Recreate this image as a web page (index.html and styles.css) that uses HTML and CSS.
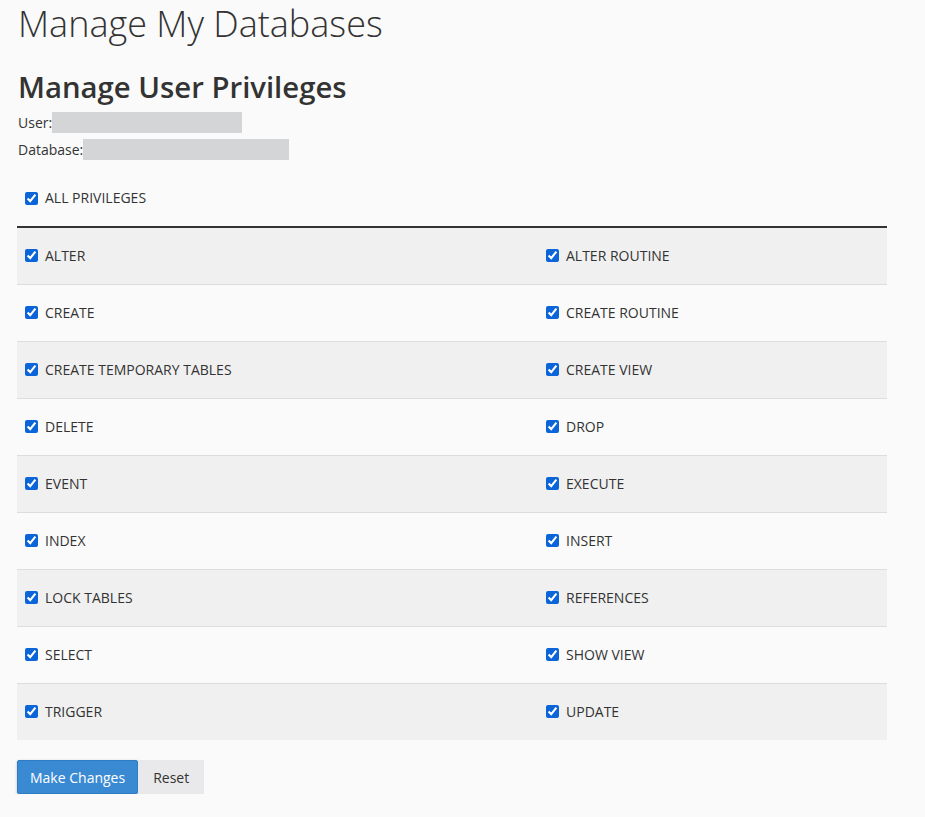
FILE: index.html
```html
<!DOCTYPE html>
<html>
<head>
<meta charset="utf-8">
<link rel="stylesheet" href="styles.css">
</head>
<body>
<main class="page">
  <h1 class="title">Manage My Databases</h1>
  <h2 class="subtitle">Manage User Privileges</h2>
  <div class="meta"><span>User:</span><span class="mask mask-user"></span></div>
  <div class="meta"><span>Database:</span><span class="mask mask-db"></span></div>

  <label class="all"><input type="checkbox" checked>ALL PRIVILEGES</label>

  <div class="grid">
    <div class="row"><label class="cell"><input type="checkbox" checked>ALTER</label><label class="cell"><input type="checkbox" checked>ALTER ROUTINE</label></div>
    <div class="row"><label class="cell"><input type="checkbox" checked>CREATE</label><label class="cell"><input type="checkbox" checked>CREATE ROUTINE</label></div>
    <div class="row"><label class="cell"><input type="checkbox" checked>CREATE TEMPORARY TABLES</label><label class="cell"><input type="checkbox" checked>CREATE VIEW</label></div>
    <div class="row"><label class="cell"><input type="checkbox" checked>DELETE</label><label class="cell"><input type="checkbox" checked>DROP</label></div>
    <div class="row"><label class="cell"><input type="checkbox" checked>EVENT</label><label class="cell"><input type="checkbox" checked>EXECUTE</label></div>
    <div class="row"><label class="cell"><input type="checkbox" checked>INDEX</label><label class="cell"><input type="checkbox" checked>INSERT</label></div>
    <div class="row"><label class="cell"><input type="checkbox" checked>LOCK TABLES</label><label class="cell"><input type="checkbox" checked>REFERENCES</label></div>
    <div class="row"><label class="cell"><input type="checkbox" checked>SELECT</label><label class="cell"><input type="checkbox" checked>SHOW VIEW</label></div>
    <div class="row"><label class="cell"><input type="checkbox" checked>TRIGGER</label><label class="cell"><input type="checkbox" checked>UPDATE</label></div>
  </div>

  <div class="actions">
    <button class="btn btn-primary" type="button">Make Changes</button>
    <button class="btn btn-default" type="button">Reset</button>
  </div>
</main>
</body>
</html>
```

FILE: styles.css
```css
html, body {
  margin: 0;
  padding: 0;
  background: #fafafa;
}
body {
  font-family: "Open Sans", "Liberation Sans", sans-serif;
  font-size: 14px;
  color: #333;
}
.page {
  padding: 0 17px;
}
.title {
  font-weight: 300;
  font-size: 36px;
  line-height: 48px;
  margin: 0;
  padding-left: 1px;
  color: #333;
}
.subtitle {
  font-weight: 600;
  font-size: 29.3px;
  line-height: 38px;
  margin: 20px 0 3px 1px;
  color: #333;
}
.meta {
  display: flex;
  align-items: center;
  height: 27px;
  padding-left: 1px;
  line-height: 20px;
}
.mask {
  display: inline-block;
  background: #d4d5d7;
  height: 21px;
}
.mask-user { width: 190px; }
.mask-db { width: 206px; }

input[type="checkbox"] {
  width: 13px;
  height: 13px;
  margin: 0 7px 0 0;
  accent-color: #0b65d8;
  flex: none;
}
.all {
  display: flex;
  align-items: center;
  margin-top: 25px;
  padding-left: 8px;
  line-height: 20px;
}
.grid {
  width: 870px;
  margin-top: 18px;
  border-top: 2px solid #333;
}
.row {
  display: grid;
  grid-template-columns: 521px 349px;
  height: 56px;
  border-bottom: 1px solid #ddd;
}
.row:nth-child(odd) {
  background: #f0f0f0;
}
.row:last-child {
  border-bottom: 0;
}
.cell {
  display: flex;
  align-items: center;
  padding-left: 8px;
  padding-bottom: 1px;
}
.actions {
  display: flex;
  margin-top: 20px;
}
.btn {
  font-family: "Open Sans", "Liberation Sans", sans-serif;
  font-size: 14px;
  height: 34px;
  border: 1px solid transparent;
  padding: 0 12px;
  cursor: pointer;
}
.btn-primary {
  background: #3a8ad3;
  color: #fff;
  border-color: #2f7cc3;
  border-radius: 2px;
  box-shadow: 0 1px 3px rgba(0,0,0,0.25);
}
.btn-default {
  background: #e9e9eb;
  color: #333;
  width: 66px;
}
```
